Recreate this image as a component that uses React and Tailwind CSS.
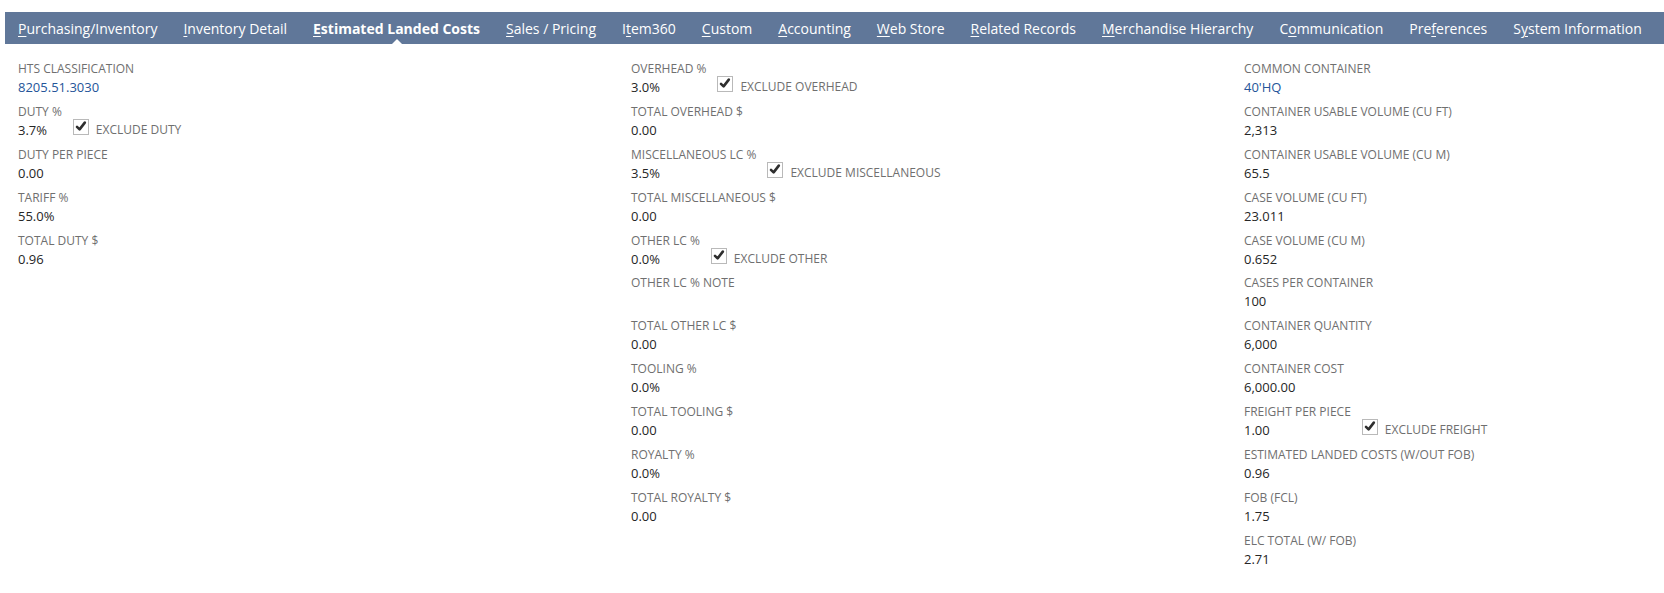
import React from "react";

const tabs = [
  { pre: "", key: "P", post: "urchasing/Inventory" },
  { pre: "", key: "I", post: "nventory Detail" },
  { pre: "", key: "E", post: "stimated Landed Costs", active: true },
  { pre: "", key: "S", post: "ales / Pricing" },
  { pre: "I", key: "t", post: "em360" },
  { pre: "", key: "C", post: "ustom" },
  { pre: "", key: "A", post: "ccounting" },
  { pre: "", key: "W", post: "eb Store" },
  { pre: "", key: "R", post: "elated Records" },
  { pre: "", key: "M", post: "erchandise Hierarchy" },
  { pre: "C", key: "o", post: "mmunication" },
  { pre: "Pre", key: "f", post: "erences" },
  { pre: "S", key: "y", post: "stem Information" },
];

const col1 = [
  { label: "HTS CLASSIFICATION", value: "8205.51.3030", link: true },
  { label: "DUTY %", value: "3.7%", check: "EXCLUDE DUTY" },
  { label: "DUTY PER PIECE", value: "0.00" },
  { label: "TARIFF %", value: "55.0%" },
  { label: "TOTAL DUTY $", value: "0.96" },
];

const col2 = [
  { label: "OVERHEAD %", value: "3.0%", check: "EXCLUDE OVERHEAD" },
  { label: "TOTAL OVERHEAD $", value: "0.00" },
  { label: "MISCELLANEOUS LC %", value: "3.5%", check: "EXCLUDE MISCELLANEOUS" },
  { label: "TOTAL MISCELLANEOUS $", value: "0.00" },
  { label: "OTHER LC %", value: "0.0%", check: "EXCLUDE OTHER" },
  { label: "OTHER LC % NOTE", value: "" },
  { label: "TOTAL OTHER LC $", value: "0.00" },
  { label: "TOOLING %", value: "0.0%" },
  { label: "TOTAL TOOLING $", value: "0.00" },
  { label: "ROYALTY %", value: "0.0%" },
  { label: "TOTAL ROYALTY $", value: "0.00" },
];

const col3 = [
  { label: "COMMON CONTAINER", value: "40'HQ", link: true },
  { label: "CONTAINER USABLE VOLUME (CU FT)", value: "2,313" },
  { label: "CONTAINER USABLE VOLUME (CU M)", value: "65.5" },
  { label: "CASE VOLUME (CU FT)", value: "23.011" },
  { label: "CASE VOLUME (CU M)", value: "0.652" },
  { label: "CASES PER CONTAINER", value: "100" },
  { label: "CONTAINER QUANTITY", value: "6,000" },
  { label: "CONTAINER COST", value: "6,000.00" },
  { label: "FREIGHT PER PIECE", value: "1.00", check: "EXCLUDE FREIGHT" },
  { label: "ESTIMATED LANDED COSTS (W/OUT FOB)", value: "0.96" },
  { label: "FOB (FCL)", value: "1.75" },
  { label: "ELC TOTAL (W/ FOB)", value: "2.71" },
];

function CheckBox() {
  return (
    <svg width="16" height="16" viewBox="0 0 16 16" className="shrink-0">
      <rect x="0.5" y="0.5" width="15" height="15" fill="#ffffff" stroke="#b9b9b9" />
      <path
        d="M4 7.8 L6.6 10.4 L11.8 3.6"
        fill="none"
        stroke="#2e2e2e"
        strokeWidth="2.6"
        strokeLinecap="round"
        strokeLinejoin="round"
      />
    </svg>
  );
}

function Field({ f }) {
  const labelEl = (
    <div className="text-[12px] leading-[18px] text-[#6f6f6f] whitespace-nowrap">
      {f.label}
    </div>
  );
  const valueEl = (
    <div
      className={
        "text-[13px] leading-[18px] h-[18px] whitespace-nowrap " +
        (f.link ? "text-[#255599]" : "text-[#262626]")
      }
    >
      {f.value}
    </div>
  );
  if (f.check) {
    return (
      <div className="flex items-start h-[42.9px]">
        <div>
          {labelEl}
          {valueEl}
        </div>
        <div className="pl-[11px] pt-[16px] flex items-start">
          <CheckBox />
          <span className="ml-[7px] mt-[2px] text-[12px] leading-[18px] text-[#6f6f6f] whitespace-nowrap">
            {f.check}
          </span>
        </div>
      </div>
    );
  }
  return (
    <div className="h-[42.9px]">
      {labelEl}
      {valueEl}
    </div>
  );
}

function Column({ fields }) {
  return (
    <div className="flex flex-col">
      {fields.map((f) => (
        <Field key={f.label} f={f} />
      ))}
    </div>
  );
}

export default function App() {
  return (
    <div
      className="w-[1664px] h-[593px] bg-white overflow-hidden"
      style={{ fontFamily: "'Open Sans', 'Noto Sans', sans-serif" }}
    >
      <div className="pt-[12px] pl-[5px]">
        <div className="h-[32px] bg-[#607799] flex items-stretch">
          {tabs.map((t, i) => (
            <div
              key={i}
              className={
                "relative px-[13px] pt-[1px] flex items-center text-[14px] text-white whitespace-nowrap " +
                (t.active ? "font-bold" : "")
              }
            >
              <span>
                {t.pre}
                <u className="underline-offset-[2px]">{t.key}</u>
                {t.post}
              </span>
              {t.active && (
                <span className="absolute bottom-0 left-1/2 -translate-x-1/2 w-0 h-0 border-l-[5px] border-r-[5px] border-b-[5px] border-l-transparent border-r-transparent border-b-white" />
              )}
            </div>
          ))}
        </div>
      </div>
      <div className="pt-[16px] pl-[18px] grid grid-cols-[613px_613px_1fr]">
        <Column fields={col1} />
        <Column fields={col2} />
        <Column fields={col3} />
      </div>
    </div>
  );
}
